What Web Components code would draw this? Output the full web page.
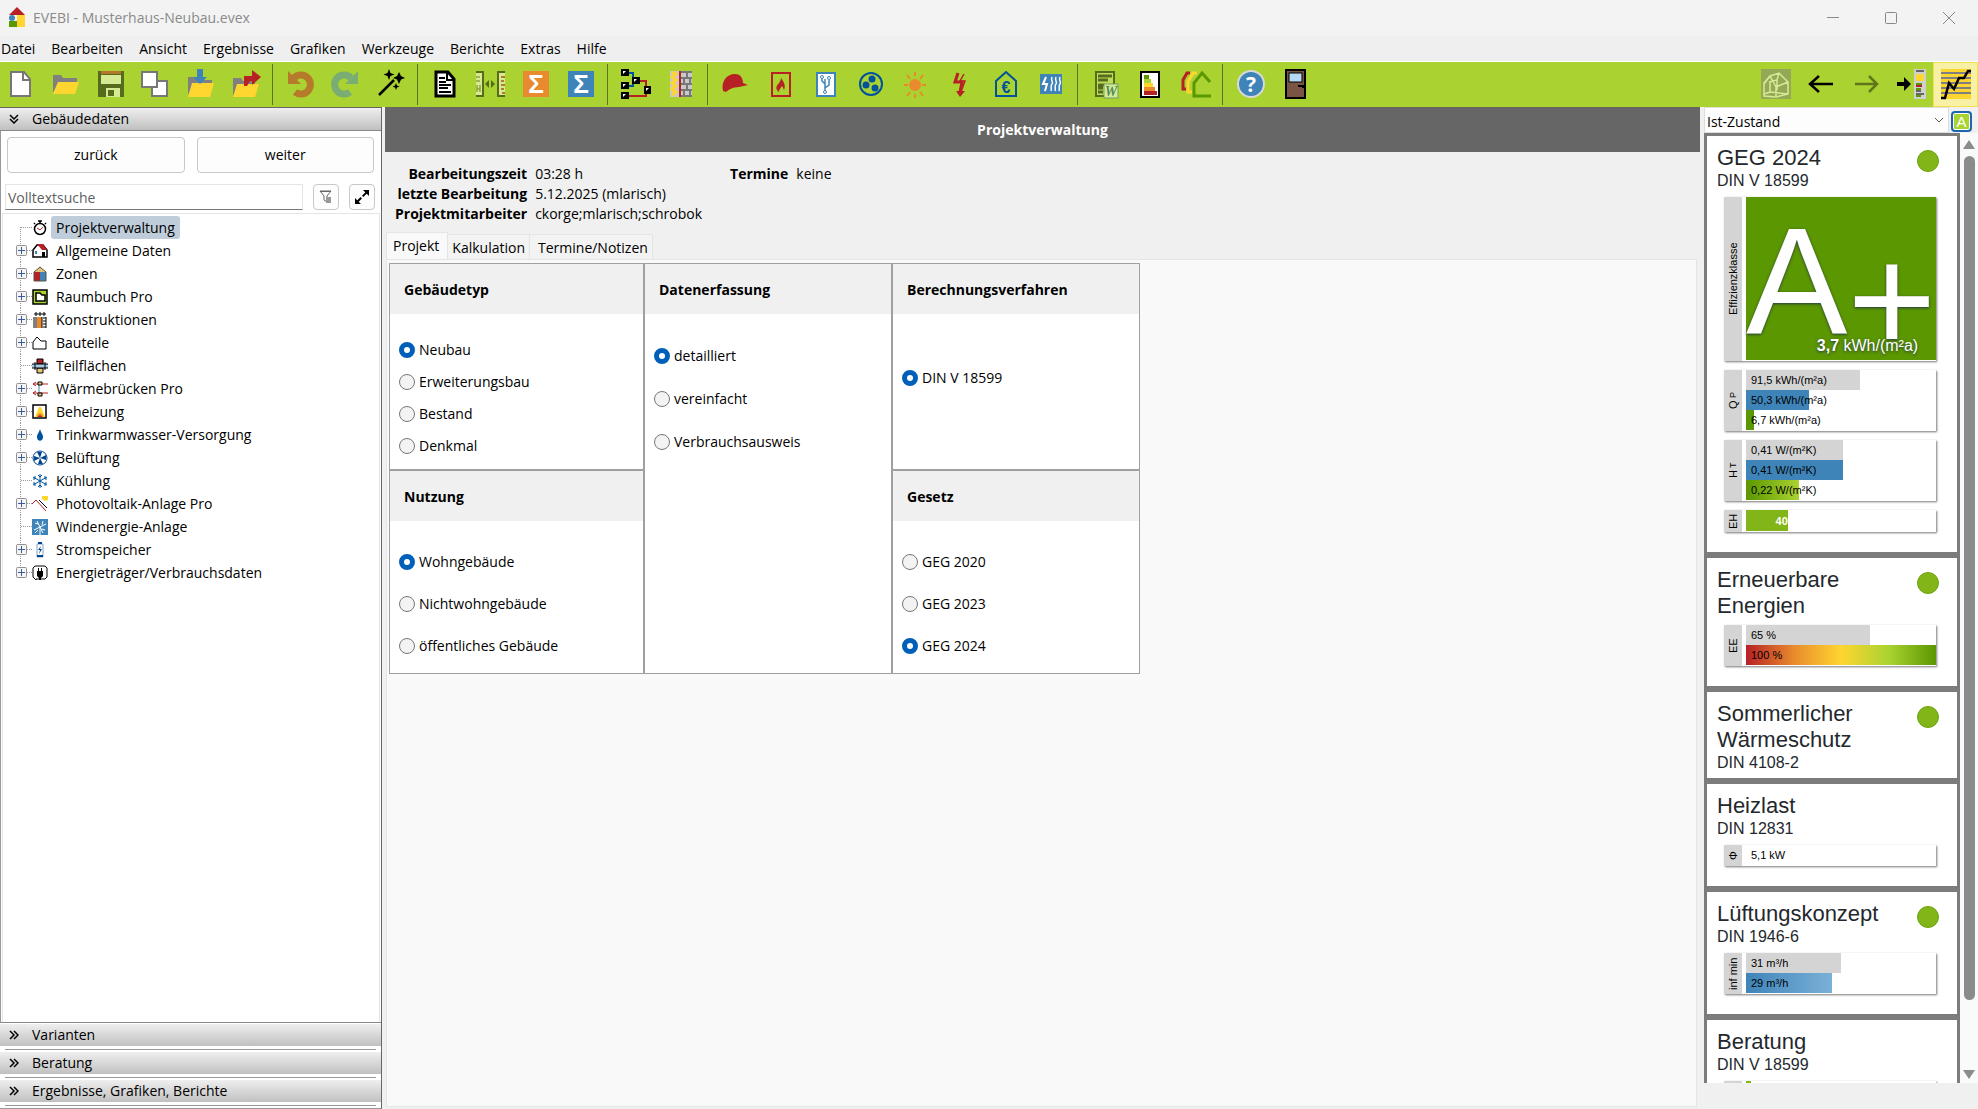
<!DOCTYPE html>
<html lang="de">
<head>
<meta charset="utf-8">
<title>EVEBI - Musterhaus-Neubau.evex</title>
<style>
  html, body { height: 100%; margin: 0; }
  body {
    background: #f0f0f0;
    color: #000;
    font: 14px/20px "Open Sans", "Noto Sans", sans-serif;
  }
</style>
</head>
<body>
<evebi-app></evebi-app>

<script>
// toolbar icons, drawn on a 32 x 32 grid
const toolIcons = {
  page: `<path d="M7 4h13l6 7v17H7z" fill="#fff" stroke="#777" stroke-width="2"/><path d="M19 4v8h7" fill="none" stroke="#777" stroke-width="2"/>`,
  folder: `<path d="M4 7h8l2 3h14v5H9L4 25z" fill="#808080"/><path d="M9 14h21l-4 12H4z" fill="#ffd530"/>`,
  save: `<path d="M4 3h26v26H4z" fill="#566b1c"/><path d="M7 3h20v3H7z" fill="#b4772b"/><path d="M7 7h20v9H7z" fill="#d6ea93"/><path d="M12 20h14v9H12z" fill="#d6ea93"/><path d="M14 22h6v6h-6z" fill="#566b1c"/>`,
  copy: `<rect x="13" y="13" width="15" height="15" fill="#fff" stroke="#777" stroke-width="2"/><rect x="3" y="4" width="15" height="15" fill="#fff" stroke="#777" stroke-width="2"/>`,
  import: `<path d="M4 9h8l2 3h14v4H9L4 27z" fill="#808080"/><path d="M8 15h22l-4 14H4z" fill="#ffd530"/><path d="M13 1h6v8h4l-7 7-7-7h4z" fill="#3f84b8"/>`,
  export: `<path d="M4 10h8l2 3h12v4H9L4 28z" fill="#808080"/><path d="M8 16h22l-4 13H4z" fill="#ffd530"/><path d="M15 18V8h8V2l9 7-9 8v-4h-2l-3 5z" fill="#b72025"/>`,
  undo: `<path d="M10 10a9.500 9.500 0 1 1 1 14" fill="none" stroke="#b57b2b" stroke-width="7"/><path d="M4 3v13h13z" fill="#b57b2b"/>`,
  redo: `<path d="M22 10a9.500 9.500 0 1 0-1 14" fill="none" stroke="#79ad74" stroke-width="7"/><path d="M29 3v13H16z" fill="#79ad74"/>`,
  wand: `<path d="M5 27l15-15" stroke="#000" stroke-width="2.500"/><path d="M15 1l1.500 4 4 1.500-4 1.500-1.500 4-1.500-4-4-1.500 4-1.500zM25 4l2 4 4 2-4 1.500-2 4.500-2-4.500-4-1.500 4-2zM22 15l1 2.500 2.500 1-2.500 1-1 2.500-1-2.500-2.500-1 2.500-1z"/>`,
  report: `<path d="M7 4h12l6 7v17H7z" fill="#fff" stroke="#000" stroke-width="3"/><path d="M18 4v8h7" fill="none" stroke="#000" stroke-width="2"/><path d="M10 10h6M10 14h7M10 17h12M10 20h9M10 24h12" stroke="#000" stroke-width="2"/>`,
  compare: `<path d="M2 3h8v26H2z" fill="#d6ea93"/><path d="M2 4h7v24H2" fill="none" stroke="#566b1c" stroke-width="2"/><path d="M2 9h4M2 13h4M3 17v7M6 17v7M3 21h3" stroke="#8aa53a" stroke-width="1.500"/><path d="M11 16l4-4v8zM21 16l-4-4v8z" fill="#566b1c"/><path d="M23 3h8v26h-8z" fill="#d6ea93"/><path d="M31 4h-7v24h7" fill="none" stroke="#566b1c" stroke-width="2"/><path d="M27 9h4M27 13h3M27 17h4M27 21h3M28 25h3" stroke="#b57b2b" stroke-width="2"/>`,
  sumOrange: `<path d="M4 3h26v26H4z" fill="#e88a2d"/><text x="17" y="25" font-size="26" font-weight="bold" text-anchor="middle" fill="#fff" font-family="Liberation Sans, sans-serif">Σ</text>`,
  sumBlue: `<path d="M4 3h26v26H4z" fill="#3f84b8"/><text x="17" y="25" font-size="26" font-weight="bold" text-anchor="middle" fill="#fff" font-family="Liberation Sans, sans-serif">Σ</text>`,
  nodes: `<path d="M8 5h6v6M8 18h6v-6" fill="none" stroke="#00529c" stroke-width="2"/><path d="M8 28h19V13h-9" fill="none" stroke="#b72025" stroke-width="2"/><path d="M2 1h8v7H2zM13 9h8v7h-8zM2 14h8v7H2zM2 24h8v7H2zM25 18h7v8h-7z"/><path d="M4 3h3l-3 3zM15 11h3l-3 3zM4 16h3l-3 3zM4 26h3l-3 3zM27 20h3l-3 3z" fill="#fff"/>`,
  wall: `<path d="M6 3h22v26H6z" fill="#c9c9c9"/><path d="M8 4l4 2-4 3 4 3-4 3 4 3-4 3 4 3-4 3" fill="none" stroke="#ffd530" stroke-width="3"/><path d="M15 3h2v26h-2z" fill="#b72025"/><path d="M17 4h11M17 10h11M17 16h11M17 22h11M17 28h11M23 4v6M20 10v6M26 10v6M23 16v6M20 22v6M26 22v6" stroke="#777" stroke-width="2"/>`,
  cap: `<path d="M4 23c-2-9 3-17 12-17 6 0 8 5 8 9l5 2-9 2c-6 0-11 3-13 5z" fill="#b72025"/>`,
  fire: `<rect x="8" y="5" width="18" height="23" fill="none" stroke="#b72025" stroke-width="2"/><path d="M15 24c-4-3-3-6 0-9 1-2 2-3 2-5 3 4 5 8 3 12-1-2-1-3-2-4-1 2-3 3-3 6z" fill="#b72025"/>`,
  hydraulic: `<rect x="8" y="5" width="18" height="23" fill="#fff" stroke="#3f84b8" stroke-width="2"/><path d="M16 11v12M16 20l4-3v-5M13 10v3l3 3" fill="none" stroke="#3f84b8" stroke-width="1.500"/><g fill="#fff" stroke="#3f84b8"><circle cx="13" cy="9" r="1.500"/><circle cx="20" cy="10" r="1.500"/><circle cx="16" cy="24" r="1.500"/></g>`,
  fan: `<circle cx="17" cy="16" r="11" fill="none" stroke="#00529c" stroke-width="2"/><g fill="#00529c"><circle cx="18" cy="11" r="3.500"/><circle cx="12" cy="17" r="3.500"/><circle cx="21" cy="20" r="3.500"/></g>`,
  sun: `<circle cx="16" cy="17" r="6" fill="#e88a2d"/><path d="M16 4v4M16 26v4M5 17h4M23 17h4M8 7l3 4M24 7l-3 4M8 28l3-4M24 28l-3-4" stroke="#e88a2d" stroke-width="2"/>`,
  bolt: `<path d="M14 5l-3 9h7l-2 10" fill="none" stroke="#b72025" stroke-width="3"/><path d="M20 6l-4 7h5l-4 11" fill="none" stroke="#b72025" stroke-width="1.500"/><path d="M12 23h9l-5 6z" fill="#b72025"/>`,
  euroHouse: `<path d="M7 28V13L17 4l10 9v15z" fill="none" stroke="#00529c" stroke-width="2"/><text x="17" y="25" font-size="16" text-anchor="middle" fill="#00529c" font-weight="bold" font-family="Liberation Sans, sans-serif">€</text>`,
  heater: `<path d="M6 6h22v20H6z" fill="#3f84b8"/><path d="M12 9l-3 7h4l-2 7" fill="none" stroke="#fff" stroke-width="2"/><path d="M18 9c-2 4 2 5 0 7s0 5-1 7M22 9c-2 4 2 5 0 7s0 5-1 7M26 9c-2 4 2 5 0 7s0 5-1 7" fill="none" stroke="#fff" stroke-width="1.500"/>`,
  word: `<rect x="7" y="4" width="18" height="24" fill="#bede5a" stroke="#566b1c" stroke-width="2"/><path d="M9 8h14M9 12h10M9 17h7M9 20h5M9 24h5" stroke="#566b1c" stroke-width="3"/><rect x="15" y="16" width="14" height="14" fill="#d6ea93" stroke="#6f9d66"/><text x="22" y="28" font-size="14" font-style="italic" font-weight="bold" text-anchor="middle" fill="#4f8a5c" font-family="Liberation Serif, serif">W</text>`,
  energy: `<rect x="7" y="4" width="18" height="25" fill="#fff" stroke="#000" stroke-width="2"/><path d="M10 7h5v4h-5z" fill="#5b9700"/><path d="M10 11h7v4h-7z" fill="#aad331"/><path d="M10 15h9v4h-9z" fill="#ffd530"/><path d="M10 19h11v4H10z" fill="#e88a2d"/><path d="M10 23h13v4H10z" fill="#b72025"/>`,
  houses: `<g fill="none" stroke-width="3"><path d="M11 5H8l-4 7v9h3" stroke="#b72025"/><path d="M18 5h-4l-5 9v10h4" stroke="#ffd530"/><path d="M31 14l-8-9-8 10v13h17" stroke="#5b9700"/></g>`,
  help: `<circle cx="17" cy="16" r="13" fill="#3f84b8" stroke="#d8d8d8" stroke-width="2"/><text x="17" y="24" font-size="21" font-weight="bold" text-anchor="middle" fill="#fff" font-family="Open Sans, sans-serif">?</text>`,
  door: `<rect x="7" y="2" width="19" height="28" fill="#7a5546" stroke="#000" stroke-width="2"/><rect x="10" y="5" width="13" height="9" fill="#b5d9f5" stroke="#000"/><path d="M19 18h5v2" fill="none" stroke="#000" stroke-width="2"/>`,
  model: `<path d="M1 1h30v30H1z" fill="#93a956"/><path d="M4 28V15l6-7 9-3 9 9v12l-12 3zM10 8l6 11v9M4 16l6-8M16 19l12-5M19 5l-2 7-8 2M4 26l6-2 18 2M10 14v10M17 12v10" fill="none" stroke="#d6ea93" stroke-width="1.500"/>`,
  back: `<path d="M28 16H5M14 8l-9 8 9 8" fill="none" stroke="#000" stroke-width="2.500"/>`,
  forward: `<path d="M5 16h22M19 8l8 8-8 8" fill="none" stroke="#60751a" stroke-width="2.500"/>`,
  panel: `<path d="M2 14h7v-5l7 7-7 7v-5H2z"/><path d="M19 1h12v30H19z" fill="#d0d0d0"/><path d="M21 3h8M21 23h5M21 26h8" stroke="#666" stroke-width="2"/><path d="M21 6h8v7h-8z" fill="#ffd530"/><path d="M21 16h6M21 21h5M21 28h5" stroke="#5b9700" stroke-width="2"/><path d="M21 18h6" stroke="#b72025" stroke-width="2"/>`,
  chart: `<path d="M1 1h30v30H1z" fill="#ffd530"/><path d="M1 5h30M1 10h30M1 15h30M1 20h30M1 25h30" stroke="#808080" stroke-width="2"/><path d="M1 30h4l4-15 5 6 5-11h5l4-7h3" fill="none" stroke="#000" stroke-width="2.500"/>`
}

// tree icons, drawn on a 16 x 16 grid
const treeIcons = {
  clock: `<circle cx="8" cy="9" r="5.500" fill="#fff" stroke="#000" stroke-width="1.500"/><path d="M6 1h4M8 1v3M13 3l1 1M3 3L2 4" stroke="#000" stroke-width="1.500"/><path d="M5 8l3 2 3-3" fill="none" stroke="#b72025"/>`,
  house: `<path d="M1 14V7l4-5h6l4 5v7z" fill="#fff" stroke="#000" stroke-width="1.500"/><path d="M5 1h6l4 6h-5z" fill="#b72025"/><path d="M3 8h2v3H3z" fill="#3f84b8"/><path d="M10 9h3v5h-3z"/>`,
  zones: `<path d="M2 6l6-5 6 5z" fill="#e3c37a"/><path d="M2 6h6v9H2z" fill="#b72025"/><path d="M8 6h6v9H8z" fill="#3f84b8"/><path d="M2 15V6l6-5 6 5v9z" fill="none" stroke="#554"/>`,
  room: `<path d="M1 1h14v14H1z" fill="#aad331" stroke="#000" stroke-width="1.500"/><path d="M4 4h4l2 2h3v6H4z" fill="#fff" stroke="#000" stroke-width="1.500"/>`,
  layers: `<path d="M2 2h12M4 0v4M8 0v4M12 0v4" stroke="#000"/><path d="M5 5h5v11H5z" fill="#e88a2d"/><path d="M2 5v11M4 5v11M10 5v11M14 5v11M11 6h3M11 9h3M11 12h3M11 15h3" stroke="#000"/>`,
  part: `<path d="M1 14V7l4-5 4 4h5v8z" fill="#fff" stroke="#000"/>`,
  areas: `<path d="M5 1h6v5H5z" fill="#b72025" stroke="#000"/><path d="M5 10h6v5H5z" fill="#e3c37a" stroke="#000"/><path d="M0 6h16v4H0z" fill="#a9cbe5"/><path d="M0 6h16M0 10h16M3 4v8M13 4v8" stroke="#000"/>`,
  bridge: `<path d="M1 3h15M1 12h15M4 1L1 3l3 2M4 10l-3 2 3 2" fill="none" stroke="#b72025"/><path d="M7 4v8" stroke="#3f84b8"/><path d="M6 1h4v3H6zM6 12h4v3H6z" fill="#e3c37a" stroke="#000"/>`,
  heating: `<rect x="1" y="1" width="13" height="13" fill="#fff" stroke="#000" stroke-width="1.500"/><path d="M3 13l4-10h2l4 10z" fill="#ffd530"/><path d="M5 13c0-5 6-5 6 0z" fill="#e88a2d"/><path d="M6 13c0-2 4-2 4 0z" fill="#b72025"/>`,
  drop: `<path d="M8 2c1 4 3 5 3 8 0 5-6 5-6 0 0-3 2-4 3-8z" fill="#00529c"/>`,
  fan: `<circle cx="8" cy="8" r="7" fill="#fff" stroke="#00468c"/><path d="M8 8L5 2h5zM8 8l6-3v5zM8 8l3 6H6zM8 8l-6 3V6z" fill="#00468c"/>`,
  snow: `<path d="M8 1v14M1 4l14 8M15 4L1 12M6 2l2 2 2-2M6 14l2-2 2 2M3 3v3H1M13 3v3h2M3 13v-3H1M13 13v-3h2" fill="none" stroke="#00529c"/>`,
  solar: `<path d="M10 0h6v4l-3 1-3-2z" fill="#ffd530"/><path d="M0 8l4-4 10 11" fill="none" stroke="#b72025"/><path d="M7 4l8 8" stroke="#000"/>`,
  wind: `<path d="M0 0h16v16H0z" fill="#3f84b8"/><path d="M8 8L5 2M8 8l6-3M8 8l3 6M8 8l-6 3M8 8v8M3 4l3 1M11 2l-1 4M13 11l-3-1M3 14l3-3" stroke="#fff"/>`,
  battery: `<path d="M5 2h6v13H5z" fill="#fff" stroke="#7fa3c9"/><path d="M6 0h4v2H6zM5 13h6v2H5z" fill="#00468c"/><path d="M9 4L6 8h2l-1 4 3-5H8z" fill="#00468c"/>`,
  plug: `<path d="M3 14L1 12V3l2-2h10l2 2v9l-2 2H4v1z" fill="#fff" stroke="#000"/><path d="M5 6h6v5l-2 2v2H7v-2l-2-2zM6 3h1v3H6zM9 3h1v3H9z"/>`
}

class EvebiElement extends HTMLElement {
  constructor() {
    super()
    this.attachShadow({ mode: 'open' })
  }

  connectedCallback() {
    this.shadowRoot.innerHTML = this.template()
  }
}

class TitleBar extends EvebiElement {
  template() {
    return `
      <style>
        :host { display: flex; align-items: center; height: 36px; padding-left: 8px; background: #f3f3f3; color: #8a8a8a; }
        .logo { margin-right: 7px; }
        .title { flex: 1; }
        button { width: 58px; height: 36px; padding: 0; border: 0; background: none; }
        svg { display: block; margin: 0 auto; }
      </style>
      <svg class="logo" width="18" height="22"><path d="M1 8l8-8 8 8z" fill="#b72025"/><circle cx="4" cy="11" r="3" fill="#3f84b8"/><path d="M9 8h8v12H9z" fill="#ffd530"/><path d="M1 14h8v6H1z" fill="#5b9700"/></svg>
      <span class="title"><slot></slot></span>
      <button aria-label="Minimieren"><svg width="12" height="12"><path d="M0 5.500h12" stroke="#888"/></svg></button>
      <button aria-label="Maximieren"><svg width="12" height="12"><rect x="0.500" y="0.500" width="11" height="11" rx="1" fill="none" stroke="#888"/></svg></button>
      <button aria-label="Schließen"><svg width="12" height="12"><path d="M0 0l12 12M12 0L0 12" stroke="#888"/></svg></button>
    `
  }
}

class MenuBar extends EvebiElement {
  template() {
    const items = this.getAttribute('items').split(',')
    return `
      <style>
        :host { display: block; height: 25px; background: #efefef; border-bottom: 1px solid #fff; }
        nav { display: flex; gap: 16px; padding: 3px 1px; }
        button { padding: 0; border: 0; background: none; font: inherit; color: inherit; }
      </style>
      <nav>${items.map(item => `<button>${item}</button>`).join('')}</nav>
    `
  }
}

class ToolButton extends EvebiElement {
  template() {
    return `
      <style>
        :host { display: block; width: 40px; }
        :host([wide]) { width: 45px; }
        :host([active]) button { background: #f8f0a5; outline: 1px solid #f3e04e; outline-offset: -1px; }
        button { display: flex; align-items: center; justify-content: center; box-sizing: border-box; width: 100%; height: 45px; padding: 0 0 1px; border: 0; background: none; }
      </style>
      <button aria-label="${this.getAttribute('label')}">
        <svg width="32" height="32" viewBox="0 0 32 32">${toolIcons[this.getAttribute('icon')]}</svg>
      </button>
    `
  }
}

class ToolBar extends EvebiElement {
  template() {
    return `
      <style>
        :host { display: flex; justify-content: space-between; height: 45px; background: #aad331; }
        .main { display: flex; gap: 5px; }
        .end { display: flex; }
        ::slotted(hr) { width: 1px; height: 41px; margin: 2px; border: 0; background: #5e7420; }
      </style>
      <div class="main"><slot></slot></div>
      <div class="end"><slot name="end"></slot></div>
    `
  }
}

class TreeItem extends EvebiElement {
  template() {
    const leaf = this.hasAttribute('leaf')
    const top = this.hasAttribute('first') ? 11 : 0
    const bottom = this.hasAttribute('last') ? 11 : 23
    const branch = `
      <svg width="16" height="23">
        <path d="M4.500 ${top}V${bottom}M5 11.500h11" fill="none" stroke="#999" stroke-dasharray="1 1"/>
        ${leaf ? '' : '<rect x="0.500" y="6.500" width="10" height="10" rx="1" fill="#f4f4f4" stroke="#919191"/><path d="M2 11.500h7M5.500 8v7" stroke="#3b5aa0"/>'}
      </svg>`
    return `
      <style>
        :host { display: flex; align-items: center; height: 23px; padding-left: 13px; }
        svg { display: block; }
        button { padding: 0; border: 0; background: none; }
        a { margin-left: 3px; padding: 0 5px; line-height: 23px; color: #000; text-decoration: none; border-radius: 3px; }
        :host([selected]) a { background: #bfcddb; }
      </style>
      ${leaf ? branch : `<button aria-label="Aufklappen">${branch}</button>`}
      <svg width="16" height="16">${treeIcons[this.getAttribute('icon')]}</svg>
      <a href="#"><slot></slot></a>
    `
  }
}

class AccordionHead extends EvebiElement {
  template() {
    const chevron = this.hasAttribute('open')
      ? 'M1 1l4 4 4-4M1 5l4 4 4-4'
      : 'M1 1l4 4-4 4M5 1l4 4-4 4'
    return `
      <style>
        :host { display: block; }
        :host([open]) { border-top: 1px solid #666; border-bottom: 1px solid #888; }
        button { display: flex; align-items: center; gap: 13px; width: 100%; height: 22px; padding: 0 9px; border: 0; background: linear-gradient(#efefef, #c0c0c0); font: inherit; color: inherit; }
        .rule { height: 1px; margin: 3px 5px 2px; background: #999; }
        :host([open]) .rule { display: none; }
      </style>
      <button><svg width="10" height="10"><path d="${chevron}" fill="none" stroke="#000" stroke-width="1.500"/></svg><slot></slot></button>
      <div class="rule"></div>
    `
  }
}

class NavPanel extends EvebiElement {
  template() {
    return `
      <style>
        :host { display: flex; flex-direction: column; box-sizing: border-box; background: #fff; border-right: 1px solid #666; border-bottom: 1px solid #999; }
        .body { display: flex; flex: 1; flex-direction: column; border-left: 1px solid #999; border-bottom: 1px solid #888; margin-bottom: 1px; }
        .steps { display: flex; gap: 12px; padding: 6px 7px 11px 6px; }
        button { box-sizing: border-box; padding: 0; background: #fdfdfd; border: 1px solid #c8c8c8; border-radius: 4px; font: inherit; color: inherit; }
        .steps button { flex: 1; height: 36px; }
        .search { display: flex; padding: 0 6px 3px 4px; }
        input { flex: 1; min-width: 0; box-sizing: border-box; height: 26px; padding: 0 2px; border: 1px solid #e5e5e5; border-bottom-color: #777; font: inherit; }
        input::placeholder { color: #5f5f5f; opacity: 1; }
        .search button { display: flex; align-items: center; justify-content: center; width: 26px; height: 26px; margin-left: 10px; }
        .tree { flex: 1; margin: 0 1px; padding: 2px 0; border: 1px solid #e5e5e5; border-bottom: 0; }
      </style>
      <accordion-head open>Gebäudedaten</accordion-head>
      <div class="body">
        <div class="steps"><button>zurück</button><button>weiter</button></div>
        <div class="search">
          <input type="text" placeholder="Volltextsuche" aria-label="Volltextsuche">
          <button aria-label="Filter"><svg width="14" height="14"><path d="M1 1h11L8 6v6l-3-2V6z" fill="none" stroke="#666"/><path d="M1 1h11v1H1z" fill="#666"/><path d="M7 7h5v6H7z" fill="#999"/></svg></button>
          <button aria-label="Vergrößern"><svg width="16" height="16"><path d="M3 13L13 3" stroke="#000" stroke-width="2" stroke-dasharray="6 2"/><path d="M9 1h6v6zM1 9v6h6z"/></svg></button>
        </div>
        <div class="tree"><slot></slot></div>
      </div>
      <accordion-head>Varianten</accordion-head>
      <accordion-head>Beratung</accordion-head>
      <accordion-head>Ergebnisse, Grafiken, Berichte</accordion-head>
    `
  }
}

// group of radio buttons, the one named in "value" is checked
class OptionGroup extends EvebiElement {
  template() {
    const name = this.getAttribute('name')
    const value = this.getAttribute('value')
    const options = this.getAttribute('options').split(',')
    return `
      <style>
        :host { display: block; background: #fff; }
        fieldset { margin: 0; padding: 0; border: 0; }
        legend { box-sizing: border-box; width: 100%; padding: 2px 14px 0; background: #f0f0f0; font-weight: bold; line-height: 48px; }
        div { padding-top: 20px; }
        label { display: flex; align-items: center; gap: 4px; height: var(--row, 42px); padding-left: 9px; }
        input { appearance: none; box-sizing: border-box; width: 16px; height: 16px; margin: 0; border: 1px solid #777; border-radius: 50%; background: #f3f3f3; }
        input:checked { border: 5px solid #005fb8; background: #fff; }
      </style>
      <fieldset>
        <legend>${name}</legend>
        <div>
          ${options.map(option => `
            <label><input type="radio" name="${name}" ${option === value ? 'checked' : ''}>${option}</label>
          `).join('')}
        </div>
      </fieldset>
    `
  }
}

class ProjectView extends EvebiElement {
  template() {
    return `
      <style>
        :host { display: flex; flex-direction: column; min-width: 0; }
        h1 { margin: 0; background: #666; color: #fff; font-size: 14px; line-height: 45px; text-align: center; }
        .info { display: flex; gap: 28px; padding: 12px 0 8px 10px; }
        dl { display: grid; grid-template-columns: auto auto; align-content: start; column-gap: 8px; margin: 0; }
        dt { font-weight: bold; text-align: right; }
        dd { margin: 0; }
        .tabs { display: flex; align-items: flex-end; padding-left: 1px; }
        .tabs button { height: 25px; padding: 2px 4px 0; border: 1px solid #e5e5e5; border-bottom: 0; border-left: 0; background: #f3f3f3; font: inherit; color: inherit; }
        .tabs button.on { height: 27px; padding: 0 8px 0 6px; border-left: 1px solid #e5e5e5; background: #f9f9f9; }
        .tabs button:last-child { padding: 2px 4px 0 8px; }
        .page { flex: 1; margin: 0 3px 2px 1px; padding: 3px 2px; border: 1px solid #e5e5e5; background: #f9f9f9; }
        .grid { display: grid; grid-template-columns: 253px 246px 246px; grid-template-rows: 205px 202px; gap: 2px; width: max-content; border: 1px solid #a0a0a0; background: #a0a0a0; }
        .tall { grid-row: span 2; }
      </style>
      <h1>Projektverwaltung</h1>
      <div class="info">
        <dl>
          <dt>Bearbeitungszeit</dt><dd>03:28 h</dd>
          <dt>letzte Bearbeitung</dt><dd>5.12.2025 (mlarisch)</dd>
          <dt>Projektmitarbeiter</dt><dd>ckorge;mlarisch;schrobok</dd>
        </dl>
        <dl><dt>Termine</dt><dd>keine</dd></dl>
      </div>
      <div class="tabs" role="tablist">
        <button class="on" role="tab">Projekt</button><button role="tab">Kalkulation</button><button role="tab">Termine/Notizen</button>
      </div>
      <div class="page">
        <div class="grid">
          <option-group style="--row: 32px" name="Gebäudetyp" value="Neubau" options="Neubau,Erweiterungsbau,Bestand,Denkmal"></option-group>
          <option-group class="tall" style="--row: 43px" name="Datenerfassung" value="detailliert" options="detailliert,vereinfacht,Verbrauchsausweis"></option-group>
          <option-group style="--row: 88px" name="Berechnungsverfahren" value="DIN V 18599" options="DIN V 18599"></option-group>
          <option-group name="Nutzung" value="Wohngebäude" options="Wohngebäude,Nichtwohngebäude,öffentliches Gebäude"></option-group>
          <option-group name="Gesetz" value="GEG 2024" options="GEG 2020,GEG 2023,GEG 2024"></option-group>
        </div>
      </div>
    `
  }
}

class ResultCard extends EvebiElement {
  template() {
    return `
      <style>
        :host { display: block; padding: 9px 17px 5px 10px; background: #fff; color: #23282d; }
        header { display: flex; justify-content: space-between; }
        h2 { margin: 0; font-size: 22px; font-weight: normal; line-height: 26px; }
        p { margin: 0; font-size: 16px; line-height: 20px; }
        .light { box-sizing: border-box; flex: none; width: 22px; height: 22px; margin: 5px 1px 0 0; border: 1px solid #6aa30c; border-radius: 50%; background: #82b517; }
        .meters { display: grid; gap: 9px; padding: 6px 4px 15px 7px; }
        .meters.none { display: none; }
      </style>
      <header>
        <div>
          <h2>${this.getAttribute('name')}</h2>
          ${this.hasAttribute('norm') ? `<p>${this.getAttribute('norm')}</p>` : ''}
        </div>
        ${this.hasAttribute('ok') ? '<span class="light"></span>' : ''}
      </header>
      <div class="meters ${this.children.length ? '' : 'none'}"><slot></slot></div>
    `
  }
}

class MeterBox extends EvebiElement {
  template() {
    return `
      <style>
        :host { display: grid; grid-template-columns: 18px 1fr; column-gap: 4px; min-height: 19px; padding-bottom: 1px; background: #fff; box-shadow: 1px 1px 2px #777; font-size: 11px; line-height: 20px; color: #000; }
        .label { display: flex; align-items: center; justify-content: center; margin-bottom: -1px; background: #d4d4d4; writing-mode: vertical-rl; transform: rotate(180deg); line-height: 18px; }
        small { margin-top: 2px; font-size: 9px; line-height: 16px; }
      </style>
      <span class="label">${this.getAttribute('label')}${this.hasAttribute('sub') ? `<small>${this.getAttribute('sub')}</small>` : ''}</span>
      <div><slot></slot></div>
    `
  }
}

class MeterBar extends EvebiElement {
  template() {
    return `
      <style>
        :host { display: block; white-space: nowrap; }
        div { box-sizing: border-box; width: ${this.getAttribute('size')}%; height: 20px; padding-left: 5px; background: ${this.getAttribute('fill')}; }
        :host([total]) div { height: 21px; padding: 0; color: #fff; font-weight: bold; text-align: right; line-height: 22px; }
      </style>
      <div><slot></slot></div>
    `
  }
}

class EfficiencyClass extends EvebiElement {
  template() {
    return `
      <style>
        :host { display: grid; grid-template-rows: 163px; background: #5b9700; color: #fff; text-shadow: 0 1px 3px #234; }
        .grade, .value { grid-area: 1 / 1; }
        .grade { display: flex; padding-top: 8px; font-size: 152px; line-height: 152px; }
        .plus { padding-top: 18px; }
        .value { align-self: end; padding: 0 18px 4px 0; text-align: right; font-size: 16px; line-height: 20px; }
      </style>
      <div class="grade"><span>A</span><span class="plus">+</span></div>
      <div class="value"><slot></slot></div>
    `
  }
}

class ResultPanel extends EvebiElement {
  template() {
    return `
      <style>
        :host { display: flex; flex-direction: column; min-height: 0; padding: 0 0 26px 4px; }
        .top { display: flex; align-items: center; gap: 2px; padding-right: 6px; height: 26px; }
        .pick { display: grid; flex: 1; align-items: center; }
        .pick > * { grid-area: 1 / 1; }
        select { appearance: none; height: 26px; padding: 3px 2px 0; border: 1px solid #ddd; background: #fdfdfd; font: inherit; color: inherit; }
        .pick svg { justify-self: end; margin-right: 5px; pointer-events: none; }
        .top button { width: 21px; height: 21px; margin-top: 2px; padding: 0; border: 2px solid #1f66b0; border-radius: 4px; background: #aad331; box-shadow: inset 0 0 0 1px #fff; color: #fff; font: 15px/17px "Liberation Sans", sans-serif; }
        .scroller { display: flex; flex: 1; min-height: 0; }
        .cards { display: flex; flex: 1; flex-direction: column; gap: 6px; box-sizing: border-box; padding: 3px; overflow: hidden; background: #7c7c7c; font-family: "Liberation Sans", Arial, sans-serif; }
        .bar { display: flex; flex-direction: column; align-items: center; width: 18px; padding: 7px 0 4px; background: #fafafa; }
        .thumb { flex: 843; width: 11px; margin-top: 7px; border-radius: 6px; background: #8b8b8b; }
        .rest { flex: 70; }
      </style>
      <div class="top">
        <div class="pick">
          <select aria-label="Variante"><option>Ist-Zustand</option></select>
          <svg width="10" height="6"><path d="M1 1l4 4 4-4" fill="none" stroke="#555"/></svg>
        </div>
        <button>A</button>
      </div>
      <div class="scroller">
        <div class="cards"><slot></slot></div>
        <div class="bar">
          <svg width="12" height="9"><path d="M6 0l6 9H0z" fill="#8b8b8b"/></svg>
          <div class="thumb"></div>
          <div class="rest"></div>
          <svg width="12" height="9"><path d="M6 9l6-9H0z" fill="#8b8b8b"/></svg>
        </div>
      </div>
    `
  }
}

class EvebiApp extends EvebiElement {
  template() {
    return `
      <style>
        :host { display: flex; flex-direction: column; height: 100vh; }
        main { display: grid; grid-template-columns: 382px 1fr 278px; flex: 1; min-height: 0; }
        project-view { margin-left: 3px; }
        result-card { flex: none; }
      </style>
      <title-bar>EVEBI - Musterhaus-Neubau.evex</title-bar>
      <menu-bar items="Datei,Bearbeiten,Ansicht,Ergebnisse,Grafiken,Werkzeuge,Berichte,Extras,Hilfe"></menu-bar>
      <tool-bar>
        <tool-button icon="page" label="Neu"></tool-button>
        <tool-button icon="folder" label="Öffnen"></tool-button>
        <tool-button icon="save" label="Speichern"></tool-button>
        <tool-button icon="copy" label="Kopieren"></tool-button>
        <tool-button icon="import" label="Import"></tool-button>
        <tool-button icon="export" label="Export"></tool-button>
        <hr>
        <tool-button icon="undo" label="Rückgängig"></tool-button>
        <tool-button icon="redo" label="Wiederholen"></tool-button>
        <tool-button icon="wand" label="Assistent"></tool-button>
        <hr>
        <tool-button icon="report" label="Bericht"></tool-button>
        <tool-button icon="compare" label="Vergleich"></tool-button>
        <tool-button icon="sumOrange" label="Summe Bedarf"></tool-button>
        <tool-button icon="sumBlue" label="Summe Referenz"></tool-button>
        <hr>
        <tool-button icon="nodes" label="Anlagenschema"></tool-button>
        <tool-button icon="wall" label="Bauteilaufbau"></tool-button>
        <hr>
        <tool-button icon="cap" label="Berater"></tool-button>
        <tool-button icon="fire" label="Heizung"></tool-button>
        <tool-button icon="hydraulic" label="Hydraulik"></tool-button>
        <tool-button icon="fan" label="Lüftung"></tool-button>
        <tool-button icon="sun" label="Sommer"></tool-button>
        <tool-button icon="bolt" label="Strom"></tool-button>
        <tool-button icon="euroHouse" label="Kosten"></tool-button>
        <tool-button icon="heater" label="Heizlast"></tool-button>
        <hr>
        <tool-button icon="word" label="Word"></tool-button>
        <tool-button icon="energy" label="Energieausweis"></tool-button>
        <tool-button icon="houses" label="Sanierungsfahrplan"></tool-button>
        <hr>
        <tool-button icon="help" label="Hilfe"></tool-button>
        <tool-button icon="door" label="Beenden"></tool-button>
        <tool-button slot="end" wide icon="model" label="3D-Modell"></tool-button>
        <tool-button slot="end" wide icon="back" label="Zurück"></tool-button>
        <tool-button slot="end" wide icon="forward" label="Vor"></tool-button>
        <tool-button slot="end" wide icon="panel" label="Leiste"></tool-button>
        <tool-button slot="end" wide active icon="chart" label="Diagramm"></tool-button>
      </tool-bar>
      <main>
        <nav-panel>
          <tree-item icon="clock" leaf first selected>Projektverwaltung</tree-item>
          <tree-item icon="house">Allgemeine Daten</tree-item>
          <tree-item icon="zones">Zonen</tree-item>
          <tree-item icon="room">Raumbuch Pro</tree-item>
          <tree-item icon="layers">Konstruktionen</tree-item>
          <tree-item icon="part">Bauteile</tree-item>
          <tree-item icon="areas" leaf>Teilflächen</tree-item>
          <tree-item icon="bridge">Wärmebrücken Pro</tree-item>
          <tree-item icon="heating">Beheizung</tree-item>
          <tree-item icon="drop">Trinkwarmwasser-Versorgung</tree-item>
          <tree-item icon="fan">Belüftung</tree-item>
          <tree-item icon="snow" leaf>Kühlung</tree-item>
          <tree-item icon="solar">Photovoltaik-Anlage Pro</tree-item>
          <tree-item icon="wind" leaf>Windenergie-Anlage</tree-item>
          <tree-item icon="battery">Stromspeicher</tree-item>
          <tree-item icon="plug" last>Energieträger/Verbrauchsdaten</tree-item>
        </nav-panel>
        <project-view></project-view>
        <result-panel>
          <result-card name="GEG 2024" norm="DIN V 18599" ok>
            <meter-box label="Effizienzklasse"><efficiency-class><b>3,7</b> kWh/(m²a)</efficiency-class></meter-box>
            <meter-box label="Q" sub="P">
              <meter-bar size="60" fill="#d4d4d4">91,5 kWh/(m²a)</meter-bar>
              <meter-bar size="33" fill="#3f84b8">50,3 kWh/(m²a)</meter-bar>
              <meter-bar size="4" fill="#5b9700">6,7 kWh/(m²a)</meter-bar>
            </meter-box>
            <meter-box label="H" sub="T">
              <meter-bar size="51" fill="#d4d4d4">0,41 W/(m²K)</meter-bar>
              <meter-bar size="51" fill="#3f84b8">0,41 W/(m²K)</meter-bar>
              <meter-bar size="28" fill="linear-gradient(90deg, #5b9700, #aad331)">0,22 W/(m²K)</meter-bar>
            </meter-box>
            <meter-box label="EH"><meter-bar total size="22" fill="#82b517">40</meter-bar></meter-box>
          </result-card>
          <result-card name="Erneuerbare<br>Energien" ok>
            <meter-box label="EE">
              <meter-bar size="65" fill="#d4d4d4">65 %</meter-bar>
              <meter-bar size="100" fill="linear-gradient(90deg, #b72025, #e88a2d 25%, #ffd530 50%, #aad331 75%, #5b9700)">100 %</meter-bar>
            </meter-box>
          </result-card>
          <result-card name="Sommerlicher<br>Wärmeschutz" norm="DIN 4108-2" ok></result-card>
          <result-card name="Heizlast" norm="DIN 12831">
            <meter-box label="Φ"><meter-bar size="0" fill="none">5,1 kW</meter-bar></meter-box>
          </result-card>
          <result-card name="Lüftungskonzept" norm="DIN 1946-6" ok>
            <meter-box label="inf min">
              <meter-bar size="50" fill="#d4d4d4">31 m³/h</meter-bar>
              <meter-bar size="45" fill="linear-gradient(90deg, #3f84b8, #7ab0d8)">29 m³/h</meter-bar>
            </meter-box>
          </result-card>
          <result-card name="Beratung" norm="DIN V 18599">
            <meter-box label=""><meter-bar size="1" fill="#82b517"></meter-bar></meter-box>
          </result-card>
        </result-panel>
      </main>
    `
  }
}

customElements.define('title-bar', TitleBar)
customElements.define('menu-bar', MenuBar)
customElements.define('tool-button', ToolButton)
customElements.define('tool-bar', ToolBar)
customElements.define('tree-item', TreeItem)
customElements.define('accordion-head', AccordionHead)
customElements.define('nav-panel', NavPanel)
customElements.define('option-group', OptionGroup)
customElements.define('project-view', ProjectView)
customElements.define('result-card', ResultCard)
customElements.define('meter-box', MeterBox)
customElements.define('meter-bar', MeterBar)
customElements.define('efficiency-class', EfficiencyClass)
customElements.define('result-panel', ResultPanel)
customElements.define('evebi-app', EvebiApp)
</script>
</body>
</html>
